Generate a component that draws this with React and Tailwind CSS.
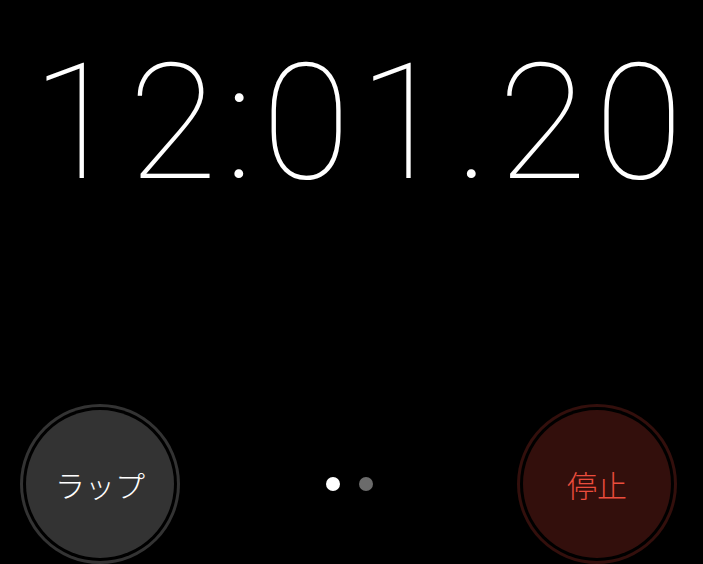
import React from 'react';

function RoundButton({ label, ring, fill, text }) {
  return (
    <button className={`w-[160px] h-[160px] rounded-full p-[3px] ${ring}`}>
      <div className="w-full h-full rounded-full bg-black p-[3px]">
        <div className={`w-full h-full rounded-full flex items-center justify-center ${fill}`}>
          <span className={`text-[30px] leading-none font-light ${text}`} style={{ fontFamily: '"Noto Sans CJK JP", sans-serif' }}>{label}</span>
        </div>
      </div>
    </button>
  );
}

export default function App() {
  return (
    <div className="w-[703px] h-[564px] bg-black flex flex-col overflow-hidden">
      <div
        className="pt-[42px] pl-[20px] text-white text-[162px] leading-none font-thin tabular-nums tracking-[8px] text-center whitespace-nowrap"
        style={{ fontFamily: 'Roboto, "Liberation Sans", sans-serif' }}
      >
        12:01.20
      </div>
      <div className="mt-auto flex items-center justify-between pl-[20px] pr-[26px]">
        <RoundButton label="ラップ" ring="bg-[#333333]" fill="bg-[#333333]" text="text-white" />
        <div className="flex items-center gap-[19px] ml-[2px]">
          <span className="w-[14px] h-[14px] rounded-full bg-white" />
          <span className="w-[14px] h-[14px] rounded-full bg-[#6b6b6b]" />
        </div>
        <RoundButton label="停止" ring="bg-[#330f0c]" fill="bg-[#330f0c]" text="text-[#eb4d3d]" />
      </div>
    </div>
  );
}
